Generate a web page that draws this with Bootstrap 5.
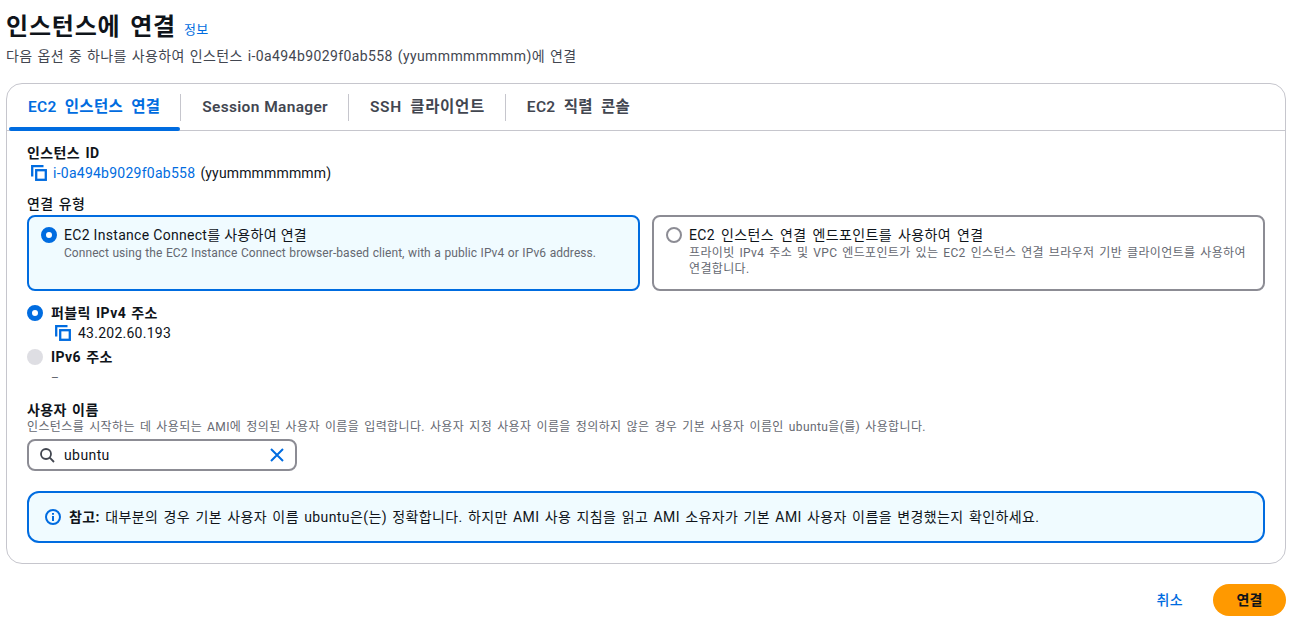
<!DOCTYPE html>
<html lang="ko">
<head>
<meta charset="UTF-8" />
<meta name="viewport" content="width=device-width, initial-scale=1.0"/>
<title>인스턴스에 연결</title>
<link href="https://cdn.jsdelivr.net/npm/bootstrap@5.3.2/dist/css/bootstrap.min.css" rel="stylesheet">
<style>
  body {
    font-family: "Roboto", "Noto Sans CJK KR", sans-serif;
    font-size: 14px;
    line-height: 20px;
    letter-spacing: .4px;
    word-spacing: 1.4px;
    color: #0f141a;
    background: #fff;
    padding: 10px 7px 0 6px;
  }
  a { color: #006ce0; text-decoration: none; }
  .page-title { font-size: 24px; line-height: 34px; font-weight: 700; margin: 0; letter-spacing: .8px; word-spacing: 3px; }
  .info-link { font-size: 13px; font-weight: 400; margin-left: 8px; margin-top: 6px; }
  .page-sub { color: #424650; margin-top: 2px; height: 20px; word-spacing: 1px; }
  .main-panel { border: 1px solid #c6c6cd; border-radius: 16px; margin-top: 17px; height: 481px; }
  .tab-strip { height: 47px; border-bottom: 1px solid #c6c6cd; padding-left: 2px; }
  .tab-item { position: relative; padding: 0 20px 0 22px; height: 46px; display: flex; align-items: center; font-size: 15.5px; font-weight: 600; color: #424650; letter-spacing: .3px; word-spacing: 4px; }
  .tab-item:first-child { padding-left: 19px; }
  .tab-item + .tab-item::before { content: ""; position: absolute; left: 0; top: 10px; height: 27px; border-left: 1px solid #c6c6cd; }
  .tab-latin { word-spacing: .5px; }
  .tab-wide { letter-spacing: .65px; }
  .tab-on { color: #006ce0; }
  .tab-on::after { content: ""; position: absolute; left: 0; right: 0; bottom: -1px; height: 4px; border-radius: 2px; background: #006ce0; }
  .panel-body { padding: 12px 20px 0 20px; }
  .fld-label { font-weight: 700; line-height: 20px; }
  .id-row { height: 20px; padding-left: 4px; gap: 6px; letter-spacing: .25px; }
  .id-name { letter-spacing: .15px; }
  .type-label { margin-top: 11px; font-weight: 500; }
  .tile-wrap { gap: 12px; margin-top: 1px; }
  .conn-tile { flex: 1 1 0; height: 76px; border: 2px solid #8c8c94; border-radius: 8px; padding: 8px 12px; gap: 7px; }
  .conn-tile.picked { border-color: #006ce0; background: #f0fbff; }
  .radio-dot { flex: none; width: 16px; height: 16px; border-radius: 50%; border: 2px solid #8c8c94; background: #fff; margin-top: 2px; }
  .radio-dot.on { border: 5px solid #006ce0; }
  .radio-dot.off { border: 0; background: #dedee3; }
  .tile-title { line-height: 20px; word-spacing: 2px; }
  .title-latin { letter-spacing: .3px; word-spacing: 0; }
  .tile-desc { font-size: 12px; line-height: 16px; color: #656871; word-spacing: 1.6px; letter-spacing: .35px; }
  .desc-latin { letter-spacing: .06px; word-spacing: .5px; }
  .ip-block { margin-top: 11px; height: 88px; }
  .ip-row { gap: 8px; height: 22px; }
  .ip-val { padding-left: 28px; height: 20px; gap: 7px; margin: -1px 0 3px; letter-spacing: .25px; }
  .ip-dash { padding-left: 24px; color: #656871; font-size: 12px; height: 20px; }
  .user-block { margin-top: 10px; }
  .user-hint { font-size: 12px; line-height: 14px; color: #656871; letter-spacing: .38px; word-spacing: 1.7px; }
  .user-input { width: 270px; height: 32px; border: 2px solid #8c8c94; border-radius: 8px; margin-top: 5px; padding: 0 10px; gap: 9px; }
  .user-input input { border: 0; outline: 0; padding: 0; flex: 1 1 auto; min-width: 0; color: #0f141a; font: inherit; letter-spacing: inherit; background: transparent; }
  .note-box { margin-top: 20px; height: 52px; border: 2px solid #006ce0; border-radius: 12px; background: #f0fbff; padding: 0 16px; gap: 8px; }
  .foot-bar { margin-top: 20px; gap: 30px; }
  .btn-cancel { color: #006ce0; font-weight: 500; }
  .btn-connect { width: 73px; height: 32px; border-radius: 16px; background: #ff9900; color: #0f141a; font-weight: 700; border: 0; padding: 0; }
</style>
</head>
<body>
  <div class="d-flex align-items-center">
    <h1 class="page-title">인스턴스에 연결</h1>
    <a href="#" class="info-link">정보</a>
  </div>
  <div class="page-sub">다음 옵션 중 하나를 사용하여 인스턴스 i-0a494b9029f0ab558 (yyummmmmmmm)에 연결</div>

  <div class="main-panel">
    <div class="tab-strip d-flex">
      <div class="tab-item tab-on">EC2 인스턴스 연결</div>
      <div class="tab-item tab-latin">Session Manager</div>
      <div class="tab-item tab-wide">SSH 클라이언트</div>
      <div class="tab-item">EC2 직렬 콘솔</div>
    </div>

    <div class="panel-body">
      <div class="fld-label">인스턴스 ID</div>
      <div class="id-row d-flex align-items-center">
        <svg width="16" height="16" viewBox="0 0 16 16" fill="none" stroke="#006ce0" stroke-width="2.3"><path d="M1.2 11.5V1.2h11.3"/><rect x="5.2" y="5.2" width="9.6" height="9.6"/></svg>
        <span><a href="#">i-0a494b9029f0ab558</a> <span class="id-name">(yyummmmmmmm)</span></span>
      </div>

      <div class="type-label">연결 유형</div>
      <div class="tile-wrap d-flex">
        <div class="conn-tile picked d-flex">
          <span class="radio-dot on"></span>
          <div>
            <div class="tile-title title-latin">EC2 Instance Connect를 사용하여 연결</div>
            <div class="tile-desc desc-latin">Connect using the EC2 Instance Connect browser-based client, with a public IPv4 or IPv6 address.</div>
          </div>
        </div>
        <div class="conn-tile d-flex">
          <span class="radio-dot"></span>
          <div>
            <div class="tile-title">EC2 인스턴스 연결 엔드포인트를 사용하여 연결</div>
            <div class="tile-desc">프라이빗 IPv4 주소 및 VPC 엔드포인트가 있는 EC2 인스턴스 연결 브라우저 기반 클라이언트를 사용하여 연결합니다.</div>
          </div>
        </div>
      </div>

      <div class="ip-block">
        <div class="ip-row d-flex align-items-center">
          <span class="radio-dot on m-0"></span>
          <span class="fw-bold">퍼블릭 IPv4 주소</span>
        </div>
        <div class="ip-val d-flex align-items-center">
          <svg width="16" height="16" viewBox="0 0 16 16" fill="none" stroke="#006ce0" stroke-width="2.3"><path d="M1.2 11.5V1.2h11.3"/><rect x="5.2" y="5.2" width="9.6" height="9.6"/></svg>
          <span>43.202.60.193</span>
        </div>
        <div class="ip-row d-flex align-items-center">
          <span class="radio-dot off m-0"></span>
          <span class="fw-bold">IPv6 주소</span>
        </div>
        <div class="ip-dash d-flex align-items-center">–</div>
      </div>

      <div class="user-block">
        <div class="fld-label">사용자 이름</div>
        <div class="user-hint">인스턴스를 시작하는 데 사용되는 AMI에 정의된 사용자 이름을 입력합니다. 사용자 지정 사용자 이름을 정의하지 않은 경우 기본 사용자 이름인 ubuntu을(를) 사용합니다.</div>
        <div class="user-input d-flex align-items-center">
          <svg width="16" height="16" viewBox="0 0 16 16" fill="none" stroke="#424650" stroke-width="1.8"><circle cx="7" cy="7" r="5"/><path d="M10.7 10.7 15 15"/></svg>
          <input type="text" value="ubuntu" />
          <svg width="16" height="16" viewBox="0 0 16 16" fill="none" stroke="#006ce0" stroke-width="2"><path d="M2 2l12 12M14 2 2 14"/></svg>
        </div>
      </div>

      <div class="note-box d-flex align-items-center">
        <svg width="16" height="16" viewBox="0 0 16 16" fill="none" stroke="#006ce0" stroke-width="2"><circle cx="8" cy="8" r="7"/><path d="M8 7v5M8 4v1.8"/></svg>
        <span><strong>참고:</strong> 대부분의 경우 기본 사용자 이름 ubuntu은(는) 정확합니다. 하지만 AMI 사용 지침을 읽고 AMI 소유자가 기본 AMI 사용자 이름을 변경했는지 확인하세요.</span>
      </div>
    </div>
  </div>

  <div class="foot-bar d-flex justify-content-end align-items-center">
    <a href="#" class="btn-cancel">취소</a>
    <button type="button" class="btn-connect">연결</button>
  </div>
<script src="https://cdn.jsdelivr.net/npm/bootstrap@5.3.2/dist/js/bootstrap.bundle.min.js"></script>
</body>
</html>
